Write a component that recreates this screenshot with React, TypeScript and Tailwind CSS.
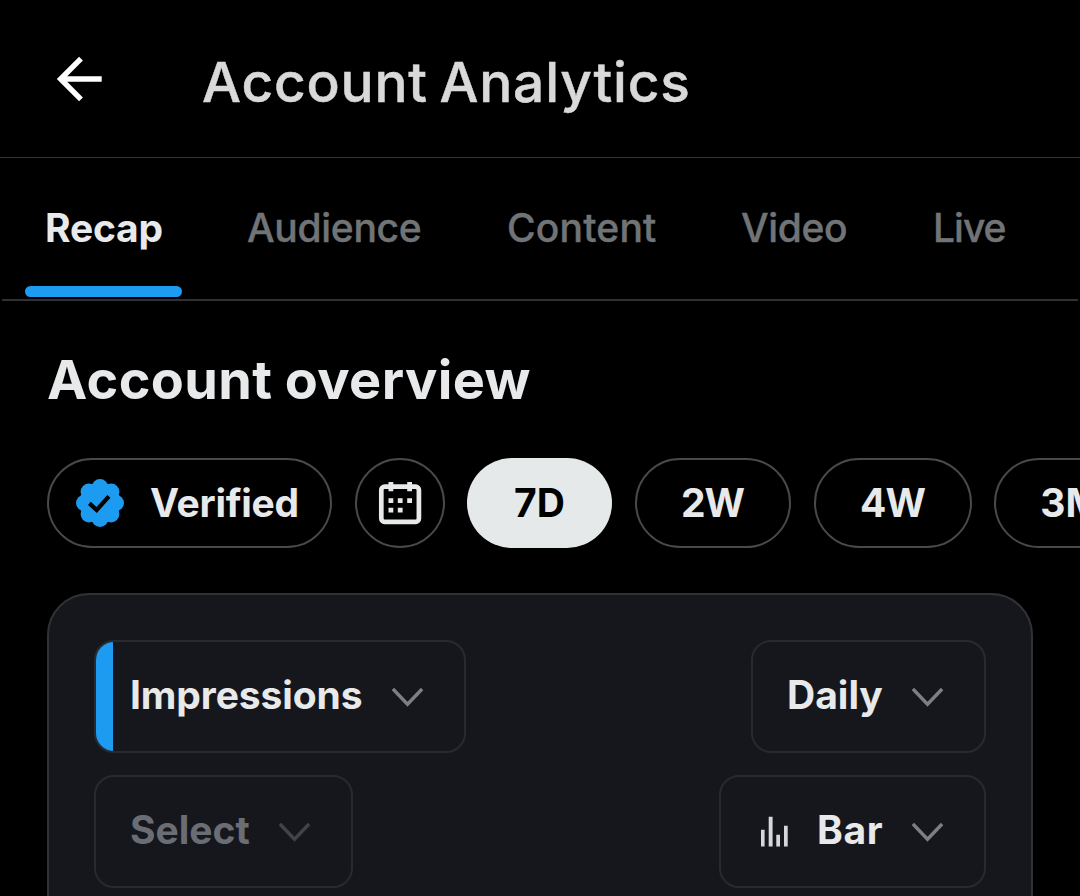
import React from 'react';

const tabs = [
  { label: 'Recap', className: 'ml-[25px] w-[157px] pl-5 font-bold tracking-[-0.2px] text-[#e7e9ea]', active: true },
  { label: 'Audience', className: 'ml-[45px] w-[215px] pl-5 font-medium tracking-[-0.3px] text-[#717477] [-webkit-text-stroke:0.4px]' },
  { label: 'Content', className: 'ml-[45px] w-[190px] pl-5 font-medium tracking-[0.2px] text-[#717477] [-webkit-text-stroke:0.4px]' },
  { label: 'Video', className: 'ml-[44px] w-[147px] pl-5 font-medium tracking-[-0.35px] text-[#717477] [-webkit-text-stroke:0.4px]' },
  { label: 'Live', className: 'ml-[45px] w-[114px] pl-5 font-medium tracking-[-1px] text-[#717477] [-webkit-text-stroke:0.4px]' }
];

const ranges = [
  { label: '7D', className: 'ml-[22px] w-[145px] bg-[#e6e9ea] text-black' },
  { label: '2W', className: 'ml-[23px] w-[156px] border-2 border-[#48494b] pr-[1px] tracking-[-1px]' },
  { label: '4W', className: 'ml-[23px] w-[158px] border-2 border-[#48494b] pr-[1px] tracking-[-1px]' },
  { label: '3M', className: 'ml-[22px] w-[156px] border-2 border-[#48494b] pr-[2px]' }
];

const ArrowLeft = () => (
  <svg className="ml-[55px] h-12 w-12" viewBox="0 0 48 48" fill="none" stroke="#fff" strokeWidth="5.4">
    <path d="M26 3.6 5.6 24 26 44.4M6 24h40.7" />
  </svg>
);

const VerifiedBadge = () => (
  <svg className="h-12 w-12" viewBox="0 0 48 48" fill="#1d9bf0">
    <circle cx="24" cy="24" r="20.4" />
    <circle cx="24" cy="8.3" r="8.3" />
    <circle cx="35.1" cy="12.9" r="8.3" />
    <circle cx="39.7" cy="24" r="8.3" />
    <circle cx="35.1" cy="35.1" r="8.3" />
    <circle cx="24" cy="39.7" r="8.3" />
    <circle cx="12.9" cy="35.1" r="8.3" />
    <circle cx="8.3" cy="24" r="8.3" />
    <circle cx="12.9" cy="12.9" r="8.3" />
    <path d="m13.4 24.4 7.3 6.6 12.2-13.6" fill="none" stroke="#000" strokeWidth="4.2" />
  </svg>
);

const CalendarIcon = () => (
  <svg className="h-12 w-12 shrink-0" viewBox="0 0 48 48" fill="#e7e9ea">
    <rect x="5.3" y="7.6" width="37.6" height="35.2" rx="3.4" fill="none" stroke="#e7e9ea" strokeWidth="4.7" />
    <path d="M12.5 3h4.8v9.3h-4.8zM31.2 3H36v9.3h-4.8z" />
    <path d="M12.5 19.2h4.8V24h-4.8zM21.8 19.2h4.8V24h-4.8zM31.2 19.2H36V24h-4.8zM12.5 28.7h4.8v4.8h-4.8zM21.8 28.7h4.8v4.8h-4.8z" />
  </svg>
);

const BarsIcon = () => (
  <svg className="h-8 w-8 shrink-0" viewBox="0 0 32 32" fill="#d6d7da">
    <path d="M2 13.8h3.6v16.8H2zM9.7.8h3.9v29.8H9.7zM17.3 18.8H21v11.8h-3.7zM25 9.8h3.7v20.8H25z" />
  </svg>
);

const Chevron = ({ color = '#7e7f84' }: { color?: string }) => (
  <svg className="h-6 w-8 shrink-0" viewBox="0 0 32 24" fill="none" stroke={color} strokeWidth="3.4">
    <path d="M.9 4 15.5 19.2 30.1 4" />
  </svg>
);

const App: React.FC = () => {
  return (
    <div className="h-[896px] w-[1080px] overflow-hidden bg-black font-['Inter',sans-serif] text-[39px] leading-none text-[#e7e9ea]">
      {/* Header */}
      <header className="flex h-[158px] items-center border-b border-[#333436]">
        <ArrowLeft />
        <h1 className="ml-[99px] mt-[8px] text-[55px] font-medium tracking-[0.82px] text-[#d9d9d9] [-webkit-text-stroke:0.5px] [word-spacing:-4px]">
          Account Analytics
        </h1>
      </header>

      {/* Tabs */}
      <nav className="mx-[2px] h-[143px] border-b-2 border-[#2f3133]">
        <div className="-ml-[2px] flex h-[139px]">
          {tabs.map((tab) => (
            <div key={tab.label} className={`flex shrink-0 flex-col justify-between pt-[50px] ${tab.className}`}>
              <span className="whitespace-nowrap">{tab.label}</span>
              {tab.active && <span className="-ml-5 h-[11px] rounded-full bg-[#1d9bf0]" />}
            </div>
          ))}
        </div>
      </nav>

      {/* Overview */}
      <h2 className="ml-[47px] mt-[52px] h-[105px] text-[54px] font-bold tracking-[0.4px] [word-spacing:-1px]">Account overview</h2>

      <div className="flex h-[90px] pl-[47px] font-bold">
        <div className="flex w-[285px] shrink-0 items-center rounded-full border-2 border-[#48494b] pl-[27px]">
          <VerifiedBadge />
          <span className="mb-[2px] ml-[26px] tracking-[-0.25px]">Verified</span>
        </div>
        <div className="ml-[23px] flex w-[90px] shrink-0 items-center justify-center rounded-full border-2 border-[#48494b]">
          <CalendarIcon />
        </div>
        {ranges.map((range) => (
          <div key={range.label} className={`flex shrink-0 items-center justify-center rounded-full pb-[2px] ${range.className}`}>
            {range.label}
          </div>
        ))}
      </div>

      {/* Chart card */}
      <div className="ml-[47px] mt-[45px] h-[360px] w-[986px] rounded-[42px] border-2 border-[#313235] bg-[#16171d] px-[45px] pt-[45px] font-bold">
        <div className="flex justify-between">
          <div className="flex h-[113px] w-[372px] items-center overflow-hidden rounded-[20px] border-2 border-[#292a2d]">
            <span className="h-full w-[17px] bg-[#1d9bf0]" />
            <span className="mb-[4px] ml-[17px] w-[262px] tracking-[-0.1px]">Impressions</span>
            <Chevron />
          </div>
          <div className="flex h-[113px] w-[235px] items-center rounded-[20px] border-2 border-[#292a2d] pl-[34px]">
            <span className="mb-[4px] w-[125px]">Daily</span>
            <Chevron />
          </div>
        </div>
        <div className="mt-[22px] flex justify-between">
          <div className="flex h-[113px] w-[259px] items-center rounded-[20px] border-2 border-[#292a2d] pl-[34px] text-[#6a6d73]">
            <span className="mb-[4px] w-[149px]">Select</span>
            <Chevron color="#424348" />
          </div>
          <div className="flex h-[113px] w-[267px] items-center rounded-[20px] border-2 border-[#292a2d] pl-[38px]">
            <BarsIcon />
            <span className="mb-[4px] ml-[26px] w-[95px] tracking-[0.6px]">Bar</span>
            <Chevron />
          </div>
        </div>
      </div>
    </div>
  );
};

export default App;
